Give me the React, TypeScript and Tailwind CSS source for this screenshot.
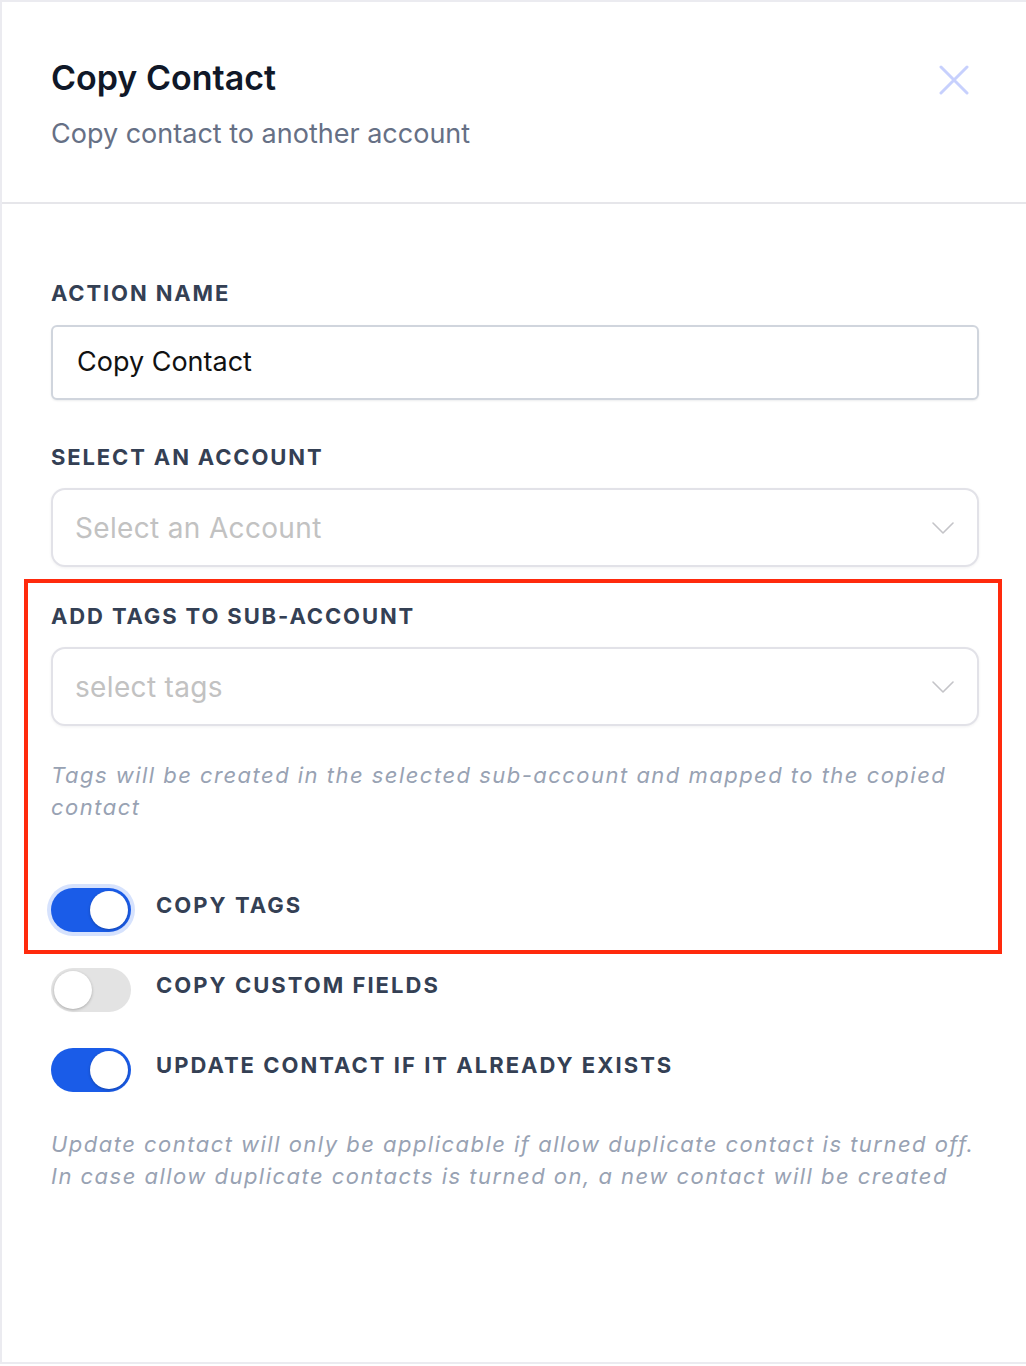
import React from "react";

const font = "font-['Inter','Noto_Sans',sans-serif]";

function CloseIcon() {
  return (
    <svg width="30" height="30" viewBox="0 0 30 30" fill="none" aria-hidden="true">
      <path d="M2 2L28 28M28 2L2 28" stroke="#c7d0fd" strokeWidth="3" strokeLinecap="round" />
    </svg>
  );
}

function Chevron() {
  return (
    <svg width="22" height="12" viewBox="0 0 22 12" fill="none" aria-hidden="true">
      <path d="M1 1L11 11L21 1" stroke="#c4c4c8" strokeWidth="1.6" strokeLinecap="round" strokeLinejoin="round" />
    </svg>
  );
}

function Label({ children }: { children: React.ReactNode }) {
  return <div className="text-[22px] font-bold leading-[28px] tracking-[0.085em] text-[#344054]">{children}</div>;
}

function SelectBox({ placeholder }: { placeholder: string }) {
  return (
    <div className="mt-[17px] flex h-[79px] items-center justify-between rounded-[14px] border-2 border-[#e2e2e8] bg-white pl-[22px] pr-[23px] shadow-[0_1px_3px_rgba(16,24,40,0.06)]">
      <span className="text-[28px] tracking-[0.012em] text-[#c2c2c2]">{placeholder}</span>
      <Chevron />
    </div>
  );
}

function Toggle({ on, ring, label }: { on: boolean; ring?: boolean; label: string }) {
  return (
    <div className="flex items-center gap-[25px]">
      <div
        className={
          on
            ? `flex h-[44px] w-[80px] shrink-0 items-center justify-end rounded-full bg-[#1a5ce8] pr-[3px] ${ring ? "ring-4 ring-[#d6e2fd]" : ""}`
            : "flex h-[44px] w-[80px] shrink-0 items-center justify-start rounded-full bg-[#e3e3e3] pl-[3px]"
        }
      >
        <div className="h-[38px] w-[38px] rounded-full bg-white shadow-[0_1px_3px_rgba(0,0,0,0.25)]" />
      </div>
      <span className="-mt-[10px] text-[22px] font-bold tracking-[0.092em] text-[#344054]">{label}</span>
    </div>
  );
}

function Helper({ children }: { children: React.ReactNode }) {
  return <p className="text-[22px] italic leading-[32px] tracking-[0.067em] text-[#98a2b3]">{children}</p>;
}

export default function App() {
  return (
    <div className={`${font} box-border h-[1364px] w-full border-t-2 border-b-2 border-l-2 border-[#ebebf0] bg-white`}>
      <header className="flex items-start justify-between border-b-2 border-[#e6e6ea] pb-[52px] pl-[49px] pr-[57px] pt-[54px]">
        <div>
          <h1 className="text-[34px] font-semibold leading-[44px] text-[#101828]">Copy Contact</h1>
          <p className="mt-[18px] text-[27px] leading-[32px] text-[#667085]">Copy contact to another account</p>
        </div>
        <div className="mt-[9px]">
          <CloseIcon />
        </div>
      </header>

      <main className="pl-[49px] pr-[47px] pt-[75px]">
        <Label>ACTION NAME</Label>
        <div className="mt-[18px] flex h-[75px] items-center rounded-[6px] border-2 border-[#d0d5dd] bg-white pl-[24px] shadow-[0_1px_2px_rgba(16,24,40,0.08)]">
          <span className="text-[27px] text-[#111111]">Copy Contact</span>
        </div>

        <div className="mt-[43px]">
          <Label>SELECT AN ACCOUNT</Label>
        </div>
        <SelectBox placeholder="Select an Account" />

        <div className="-ml-[27px] -mr-[23px] mt-[12px] border-4 border-[#ff2a0d] pb-[18px] pl-[23px] pr-[19px] pt-[19px]">
          <Label>ADD TAGS TO SUB-ACCOUNT</Label>
          <SelectBox placeholder="select tags" />
          <div className="mt-[33px]">
            <Helper>Tags will be created in the selected sub-account and mapped to the copied contact</Helper>
          </div>
          <div className="mt-[65px]">
            <Toggle on ring label="COPY TAGS" />
          </div>
        </div>

        <div className="mt-[14px]">
          <Toggle on={false} label="COPY CUSTOM FIELDS" />
        </div>
        <div className="mt-[36px]">
          <Toggle on label="UPDATE CONTACT IF IT ALREADY EXISTS" />
        </div>
        <div className="mt-[36px]">
          <Helper>
            Update contact will only be applicable if allow duplicate contact is turned off. In case allow duplicate
            contacts is turned on, a new contact will be created
          </Helper>
        </div>
      </main>
    </div>
  );
}
